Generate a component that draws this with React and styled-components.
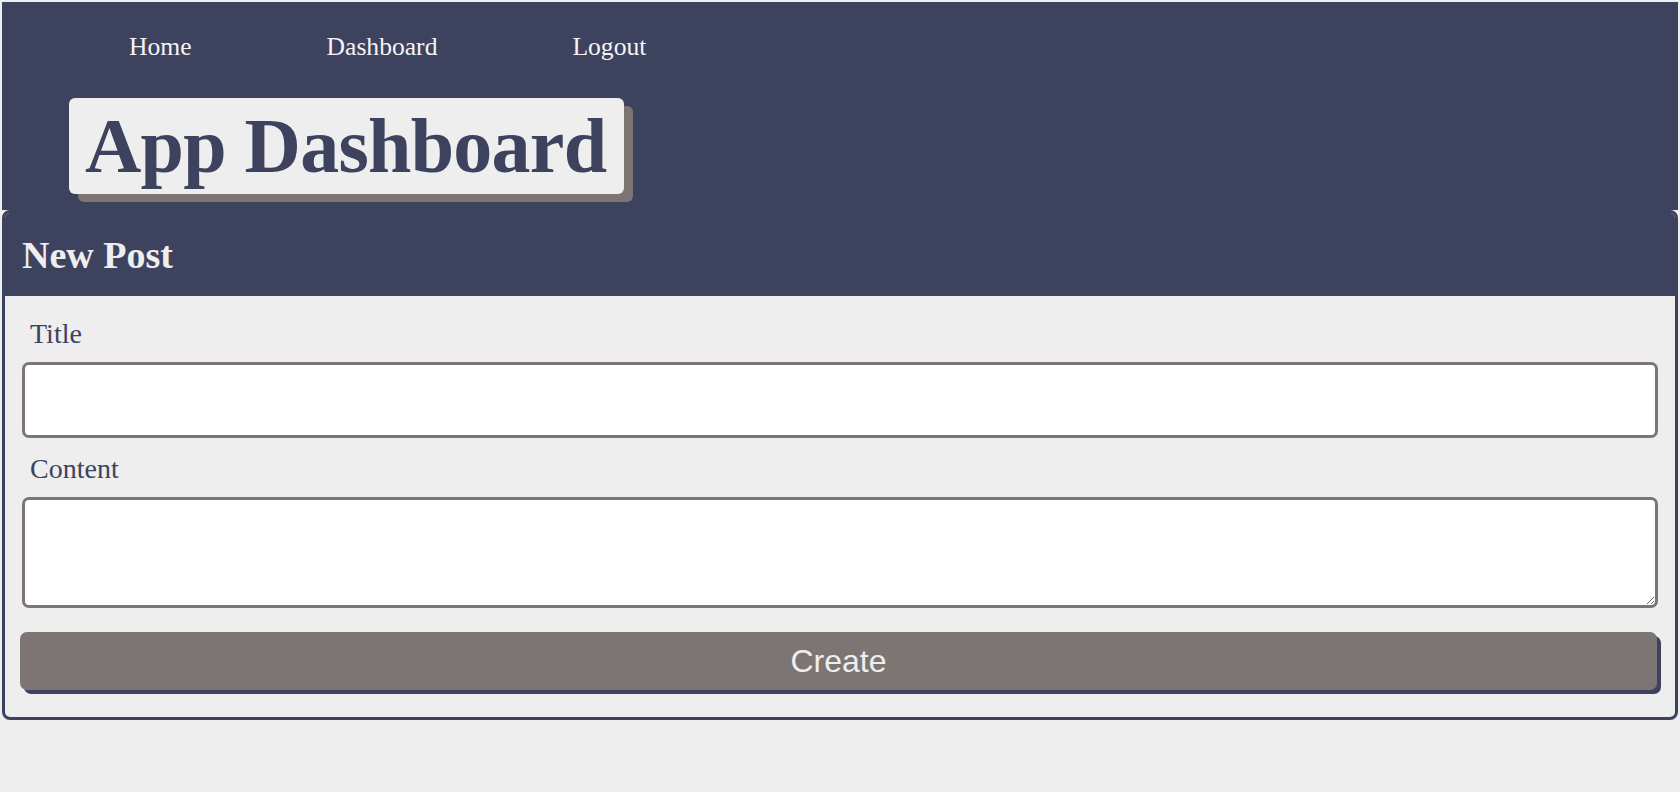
import React from "react";
import styled, { createGlobalStyle } from "styled-components";

const navy = "#3d425e";
const taupe = "#7d7573";
const light = "#eeeeee";

const GlobalStyle = createGlobalStyle`
  html { overflow-x: hidden; }
  body {
    margin: 2px;
    background: ${light};
    font-family: "Liberation Serif", "Times New Roman", serif;
  }
  * { box-sizing: border-box; }
`;

const Header = styled.header`
  background: ${navy};
  padding-bottom: 16px;
`;

const Nav = styled.nav`
  background: ${navy};
  height: 89px;
  width: calc(100% + 4px);
  display: flex;
  align-items: center;
  padding-left: 127px;
  gap: 135px;
`;

const NavLink = styled.a`
  color: #f4f4f4;
  font-size: 25.6px;
  text-decoration: none;
  cursor: pointer;
`;

const TitleWrap = styled.div`
  padding: 7px 0 0 67px;
  display: flex;
`;

const TitleBox = styled.h1`
  margin: 0;
  background: ${light};
  color: ${navy};
  font-size: 78px;
  font-weight: bold;
  letter-spacing: -0.75px;
  padding: 3px 18px 3px 16px;
  border-radius: 6px;
  box-shadow: 9px 8px 0 ${taupe};
`;

const Card = styled.section`
  border: 3px solid ${navy};
  border-radius: 8px;
  overflow: hidden;
  background: ${light};
`;

const CardHeader = styled.h2`
  margin: 0;
  background: ${navy};
  color: ${light};
  font-size: 38px;
  font-weight: bold;
  padding: 20px 17px 19px 17px;
`;

const Form = styled.form`
  display: flex;
  flex-direction: column;
  padding: 22px 17px 27px 15px;
`;

const Label = styled.label`
  color: ${navy};
  font-size: 28px;
  padding-left: 10px;
  margin: ${(p) => (p.$first ? "0" : "15px")} 0 12px;
`;

const fieldStyles = `
  display: block;
  margin-left: 2px;
  width: calc(100% - 2px);
  border: 3px solid ${taupe};
  border-radius: 7px;
  background: #ffffff;
  font-family: "Liberation Sans", Arial, sans-serif;
  font-size: 20px;
  padding: 8px 12px;
  outline: none;
`;

const TextInput = styled.input`
  ${fieldStyles}
  height: 76px;
`;

const TextArea = styled.textarea`
  ${fieldStyles}
  height: 111px;
  resize: vertical;
`;

const Button = styled.button`
  margin-top: 24px;
  width: calc(100% - 1px);
  height: 58px;
  border: none;
  border-radius: 7px;
  background: ${taupe};
  color: ${light};
  font-family: "Liberation Sans", Arial, sans-serif;
  font-size: 32px;
  box-shadow: 4px 4px 0 ${navy};
  cursor: pointer;
`;

export default function App() {
  return (
    <>
      <GlobalStyle />
      <Header>
        <Nav>
          <NavLink>Home</NavLink>
          <NavLink>Dashboard</NavLink>
          <NavLink>Logout</NavLink>
        </Nav>
        <TitleWrap>
          <TitleBox>App Dashboard</TitleBox>
        </TitleWrap>
      </Header>
      <Card>
        <CardHeader>New Post</CardHeader>
        <Form onSubmit={(e) => e.preventDefault()}>
          <Label $first htmlFor="title">Title</Label>
          <TextInput id="title" type="text" />
          <Label htmlFor="content">Content</Label>
          <TextArea id="content" />
          <Button type="submit">Create</Button>
        </Form>
      </Card>
    </>
  );
}
